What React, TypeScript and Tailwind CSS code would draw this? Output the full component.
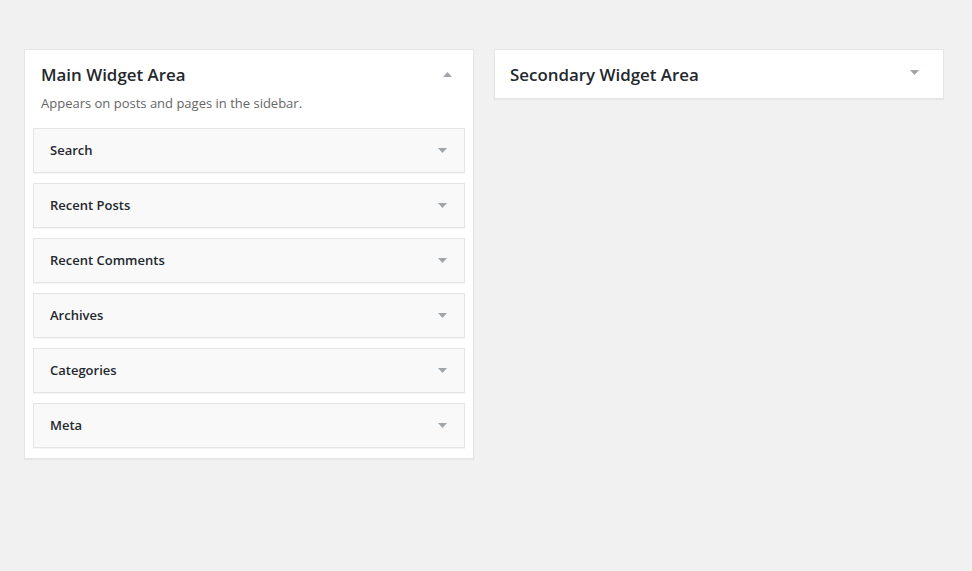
import React from "react";

const widgets = ["Search", "Recent Posts", "Recent Comments", "Archives", "Categories", "Meta"];

function Arrow({ up = false, className = "" }: { up?: boolean; className?: string }) {
  return (
    <svg width="9" height="5" viewBox="0 0 9 5" className={className}>
      {up ? <polygon points="0,5 9,5 4.5,0" fill="#a0a5aa" /> : <polygon points="0,0 9,0 4.5,5" fill="#a0a5aa" />}
    </svg>
  );
}

export default function App() {
  return (
    <div
      className="min-h-[571px] w-full bg-[#f1f1f1] pt-[49px] pl-[24px] text-[#23282d]"
      style={{ fontFamily: '"Open Sans", "Liberation Sans", sans-serif' }}
    >
      <div className="flex items-start gap-[20px]">
        <div className="w-[450px] border border-[#e5e5e5] bg-white pb-[10px] shadow-[0_1px_1px_rgba(0,0,0,0.04)]">
          <div className="flex items-center justify-between pl-[16px] pr-[21px] pt-[13px]">
            <h2 className="m-0 text-[16.9px] font-semibold leading-[24px]">Main Widget Area</h2>
            <Arrow up className="mb-[2px]" />
          </div>
          <p className="mt-[6px] pl-[16px] text-[13px] leading-[20px] text-[#666]">
            Appears on posts and pages in the sidebar.
          </p>
          <div className="mt-[15px] flex flex-col gap-[10px] px-[8px]">
            {widgets.map((w) => (
              <div
                key={w}
                className="flex h-[45px] items-center justify-between border border-[#e5e5e5] bg-[#f9f9f9] pb-[2px] pl-[16px] pr-[17px] shadow-[0_1px_1px_rgba(0,0,0,0.04)]"
              >
                <span className="text-[13px] font-semibold leading-[20px]">{w}</span>
                <Arrow className="mt-[1px]" />
              </div>
            ))}
          </div>
        </div>
        <div className="w-[450px] border border-[#e5e5e5] bg-white shadow-[0_1px_1px_rgba(0,0,0,0.04)]">
          <div className="flex items-center justify-between pt-[13px] pb-[11px] pl-[15px] pr-[24px]">
            <h2 className="m-0 text-[16.9px] font-semibold leading-[24px]">Secondary Widget Area</h2>
            <Arrow className="mb-[6px]" />
          </div>
        </div>
      </div>
    </div>
  );
}
